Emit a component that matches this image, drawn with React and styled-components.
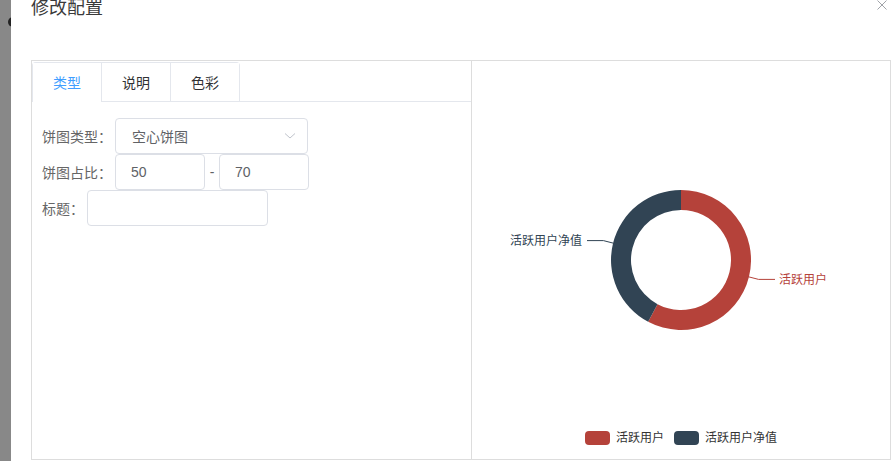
import styled, { createGlobalStyle } from "styled-components";

const GlobalStyle = createGlobalStyle`
  html, body {
    margin: 0;
    padding: 0;
    background: #fff;
    overflow: hidden;
  }
  body {
    font-family: "Liberation Sans", "Noto Sans CJK SC", sans-serif;
  }
`;

const RED = "#b5423a";
const SLATE = "#314454";

const tabs = ["类型", "说明", "色彩"];

const App = () => {
  return (
    <>
      <GlobalStyle />
      <Page>
        <Backdrop />
        <Dialog>
          <DialogHeader>
            <Title>修改配置</Title>
            <CloseButton>
              <svg width="10" height="10" viewBox="0 0 10 10">
                <path d="M0.5 0.5 L9.5 9.5 M9.5 0.5 L0.5 9.5" stroke="#a0a3a8" strokeWidth="1" fill="none" />
              </svg>
            </CloseButton>
          </DialogHeader>
          <Body>
            <LeftPanel>
              <TabsHeader>
                <TabsNav>
                  {tabs.map((t, i) => (
                    <Tab key={t} $active={i === 0} $first={i === 0}>
                      {t}
                    </Tab>
                  ))}
                </TabsNav>
              </TabsHeader>
              <Form>
                <FormRow>
                  <Label>饼图类型：</Label>
                  <Select>
                    <span>空心饼图</span>
                    <svg width="12" height="8" viewBox="0 0 12 8">
                      <path d="M1 1.5 L6 6 L11 1.5" stroke="#c0c4cc" strokeWidth="1" fill="none" />
                    </svg>
                  </Select>
                </FormRow>
                <FormRow>
                  <Label>饼图占比：</Label>
                  <Input $width={90} defaultValue="50" />
                  <Dash>-</Dash>
                  <Input $width={90} defaultValue="70" />
                </FormRow>
                <FormRow>
                  <Label>标题：</Label>
                  <Input $width={181} defaultValue="" />
                </FormRow>
              </Form>
            </LeftPanel>
            <RightPanel>
              <ChartArea>
                <svg width="418" height="370" viewBox="0 0 418 370">
                  <path
                    d="M209 129 A70 70 0 1 1 176.14 260.8 L185.53 243.15 A50 50 0 1 0 209 149 Z"
                    fill={RED}
                  />
                  <path
                    d="M176.14 260.8 A70 70 0 0 1 209 129 L209 149 A50 50 0 0 0 185.53 243.15 Z"
                    fill={SLATE}
                  />
                  <path d="M276.9 215.9 L286.6 218.4 L303 218.4" stroke={RED} strokeWidth="1" fill="none" />
                  <path d="M141.1 182.1 L131.4 179.6 L115 179.6" stroke={SLATE} strokeWidth="1" fill="none" />
                  <ChartText x="307" y="218.5" fill={RED} dominantBaseline="central">
                    活跃用户
                  </ChartText>
                  <ChartText x="110" y="179.8" fill={SLATE} textAnchor="end" dominantBaseline="central">
                    活跃用户净值
                  </ChartText>
                </svg>
              </ChartArea>
              <Legend>
                <LegendItem>
                  <Swatch $color={RED} />
                  活跃用户
                </LegendItem>
                <LegendItem>
                  <Swatch $color={SLATE} />
                  活跃用户净值
                </LegendItem>
              </Legend>
            </RightPanel>
          </Body>
        </Dialog>
      </Page>
    </>
  );
};

const Page = styled.div`
  display: flex;
  width: 894px;
  height: 461px;
  overflow: hidden;
`;

const Backdrop = styled.div`
  position: relative;
  width: 11px;
  flex-shrink: 0;
  background: #888;

  &::after {
    content: "";
    position: absolute;
    left: 8px;
    top: 17px;
    width: 10px;
    height: 10px;
    border-radius: 50%;
    background: #222;
  }
`;

const Dialog = styled.div`
  position: relative;
  z-index: 1;
  flex: 1;
  background: #fff;
  padding-left: 20px;
`;

const DialogHeader = styled.div`
  display: flex;
  justify-content: space-between;
  align-items: flex-start;
  height: 18px;
  padding-right: 7px;
`;

const Title = styled.div`
  font-size: 18px;
  line-height: 18px;
  margin-top: -1px;
  color: #3a3a3a;
`;

const CloseButton = styled.div`
  width: 10px;
  height: 10px;
  line-height: 0;
`;

const Body = styled.div`
  display: flex;
  width: 860px;
  height: 400px;
  margin-top: 42px;
  border: 1px solid #ddd;
  box-sizing: border-box;
`;

const LeftPanel = styled.div`
  width: 440px;
  flex-shrink: 0;
  border-right: 1px solid #ddd;
  box-sizing: border-box;
`;

const TabsHeader = styled.div`
  display: flex;
  margin-top: 1px;
  border-bottom: 1px solid #e4e7ed;
`;

const TabsNav = styled.div`
  display: flex;
  border: 1px solid #e4e7ed;
  border-bottom: none;
  border-radius: 4px 4px 0 0;
  margin-bottom: -1px;
`;

const Tab = styled.div`
  height: 39px;
  box-sizing: border-box;
  padding: 0 20px;
  display: flex;
  align-items: center;
  font-size: 14px;
  color: ${(p) => (p.$active ? "#409eff" : "#303133")};
  border-left: ${(p) => (p.$first ? "none" : "1px solid #e4e7ed")};
  border-bottom: 1px solid ${(p) => (p.$active ? "#fff" : "#e4e7ed")};
  background: #fff;
`;

const Form = styled.div`
  display: flex;
  flex-direction: column;
  padding: 16px 10px 0;
`;

const FormRow = styled.div`
  display: flex;
  align-items: center;
  height: 36px;
`;

const Label = styled.span`
  font-size: 14px;
  color: #666;
  margin-right: 3px;
  white-space: nowrap;
`;

const Select = styled.div`
  width: 193px;
  height: 36px;
  box-sizing: border-box;
  border: 1px solid #dcdfe6;
  border-radius: 4px;
  padding: 0 11px 0 16px;
  display: flex;
  align-items: center;
  justify-content: space-between;
  font-size: 14px;
  color: #606266;
`;

const Input = styled.input`
  width: ${(p) => p.$width}px;
  height: 36px;
  box-sizing: border-box;
  border: 1px solid #dcdfe6;
  border-radius: 4px;
  padding: 0 15px;
  font-family: inherit;
  font-size: 14px;
  color: #606266;
  outline: none;
`;

const Dash = styled.span`
  width: 14px;
  text-align: center;
  font-size: 14px;
  color: #606266;
`;

const RightPanel = styled.div`
  flex: 1;
  display: flex;
  flex-direction: column;
`;

const ChartArea = styled.div`
  flex: 1;
  line-height: 0;
`;

const ChartText = styled.text`
  font-size: 12px;
  font-family: "Liberation Sans", "Noto Sans CJK SC", sans-serif;
`;

const Legend = styled.div`
  display: flex;
  justify-content: center;
  gap: 10px;
  height: 14px;
  margin-bottom: 14px;
`;

const LegendItem = styled.div`
  display: flex;
  align-items: center;
  gap: 6px;
  font-size: 12px;
  color: #333;
  line-height: 14px;
`;

const Swatch = styled.span`
  width: 25px;
  height: 14px;
  border-radius: 4px;
  background: ${(p) => p.$color};
`;

export default App;
